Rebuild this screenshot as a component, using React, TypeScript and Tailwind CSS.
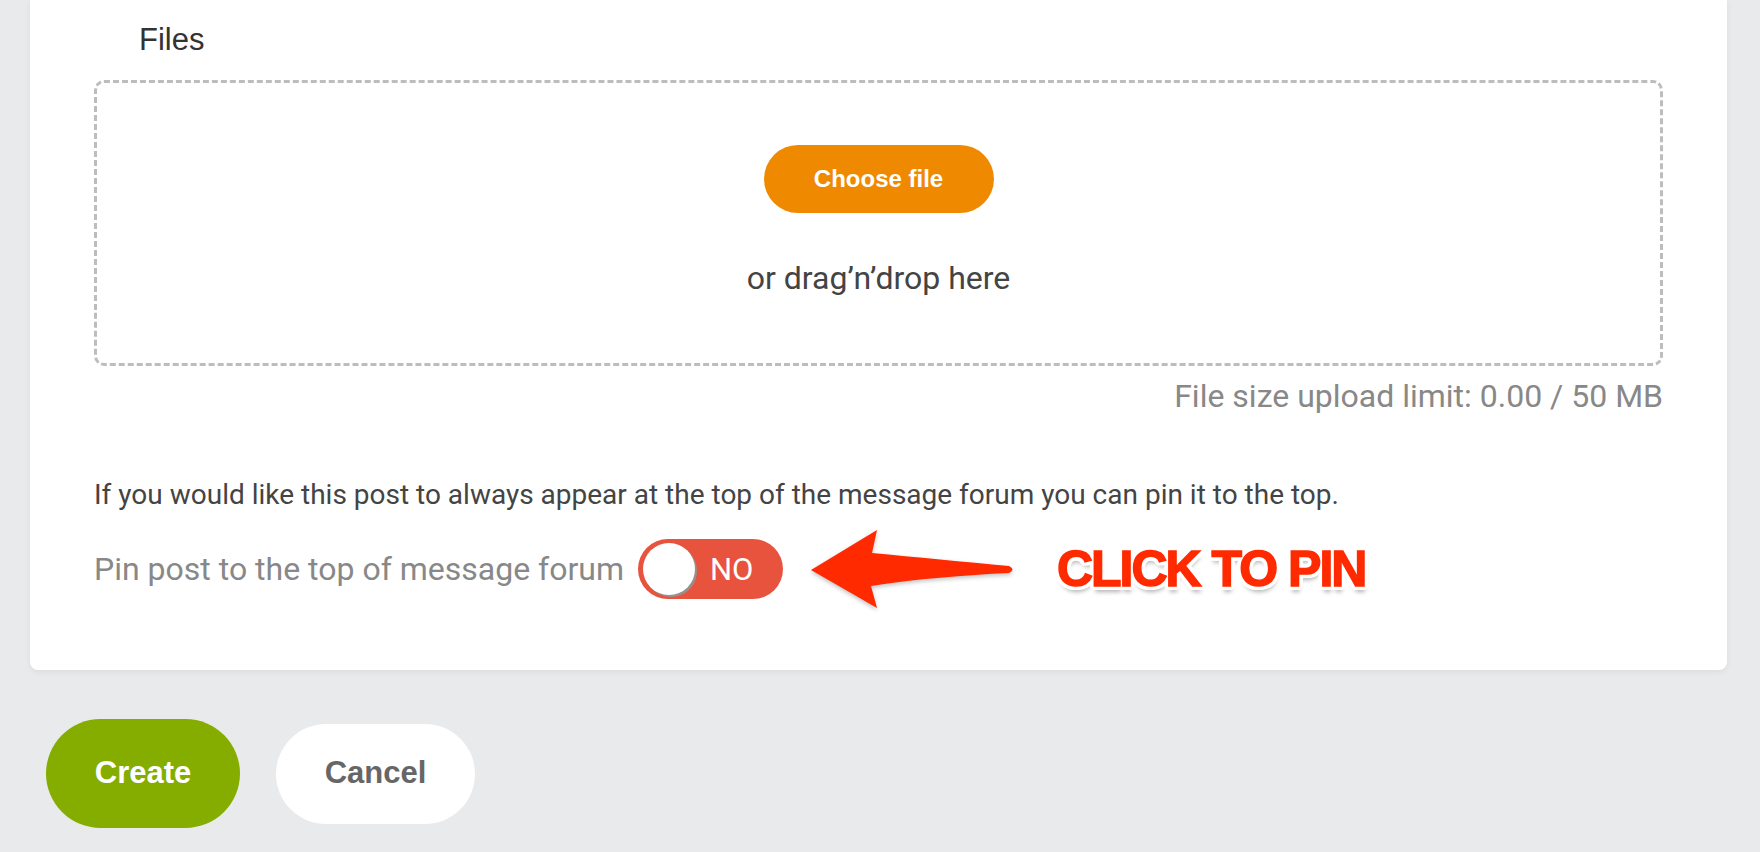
import { useState } from 'react';

const PinArrow = () => (
    <svg width="214" height="84" viewBox="0 0 214 84" className="[filter:drop-shadow(0_2px_2px_rgba(0,0,0,0.25))]">
        <path
            d="M6 43 L72 3 L67 26 C110 30 160 35 204 39 Q211 42.5 204 46 C160 48 110 52 66 59 L72 81 Z"
            fill="#ff2a00"
        />
    </svg>
);

const PinToggle = ({ on, onToggle }: { on: boolean; onToggle: () => void }) => (
    <button
        onClick={onToggle}
        className="relative flex h-[60px] w-[145px] items-center rounded-full bg-[#e8533e]"
    >
        <span className="ml-[5px] size-[52px] rounded-full bg-white shadow-[2px_2px_0_0_#9a8f8c]" />
        <span className="ml-[15px] font-['Roboto'] text-[31px] font-normal leading-none text-white">
            {on ? 'YES' : 'NO'}
        </span>
    </button>
);

const App = () => {
    const [pinned, setPinned] = useState(false);
    return (
        <div className="min-h-[852px] w-full bg-[#e9eaec] pb-6 font-['Roboto',sans-serif]">
            <div className="ml-[30px] w-[1697px] rounded-b-[8px] bg-white px-[64px] pb-[59px] shadow-[0_2px_6px_rgba(0,0,0,0.06)]">
                <div className="pt-[22px] pl-[45px] font-['Liberation_Sans',sans-serif] text-[31px] leading-[36px] text-[#333]">
                    Files
                </div>
                <div className="mt-[22px] flex h-[286px] flex-col items-center rounded-[10px] border-[3px] border-dashed border-[#bdbdbd] pt-[62px]">
                    <button className="h-[68px] w-[230px] rounded-full bg-[#ef8a00] font-['Liberation_Sans',sans-serif] text-[24px] font-bold text-white">
                        Choose file
                    </button>
                    <p className="mt-[47px] text-[32px] leading-[36px] text-[#444]">or drag’n’drop here</p>
                </div>
                <p className="mt-[12px] text-right text-[32px] leading-[36px] text-[#888]">
                    File size upload limit: 0.00 / 50 MB
                </p>
                <p className="mt-[64px] text-[28px] leading-[34px] text-[#444]">
                    If you would like this post to always appear at the top of the message forum you can pin it to the top.
                </p>
                <div className="mt-[15px] flex items-center">
                    <span className="text-[32px] leading-[36px] text-[#888]">Pin post to the top of message forum</span>
                    <div className="ml-[14px]">
                        <PinToggle on={pinned} onToggle={() => setPinned(!pinned)} />
                    </div>
                    <div className="ml-[22px]">
                        <PinArrow />
                    </div>
                    <span className="ml-[38px] font-['Liberation_Sans',sans-serif] text-[50px] font-bold leading-none tracking-[-2px] text-[#ff2a00] [-webkit-text-stroke:1.5px_#ff2a00] [text-shadow:4px_0_0_white,-4px_0_0_white,0_4px_0_white,0_-4px_0_white,3px_3px_0_white,-3px_3px_0_white,3px_-3px_0_white,-3px_-3px_0_white,2px_4px_0_white,-2px_4px_0_white,2px_-4px_0_white,-2px_-4px_0_white,4px_2px_0_white,-4px_2px_0_white,4px_-2px_0_white,-4px_-2px_0_white,1px_6px_4px_rgba(0,0,0,0.3)]">
                        CLICK TO PIN
                    </span>
                </div>
            </div>
            <div className="mt-[49px] flex items-center pl-[46px] font-['Liberation_Sans',sans-serif]">
                <button className="h-[109px] w-[194px] rounded-full bg-[#85ad00] text-[31px] font-bold text-white">
                    Create
                </button>
                <button className="ml-[36px] h-[100px] w-[199px] rounded-full bg-white text-[31px] font-bold text-[#666]">
                    Cancel
                </button>
            </div>
        </div>
    );
};

export default App;
